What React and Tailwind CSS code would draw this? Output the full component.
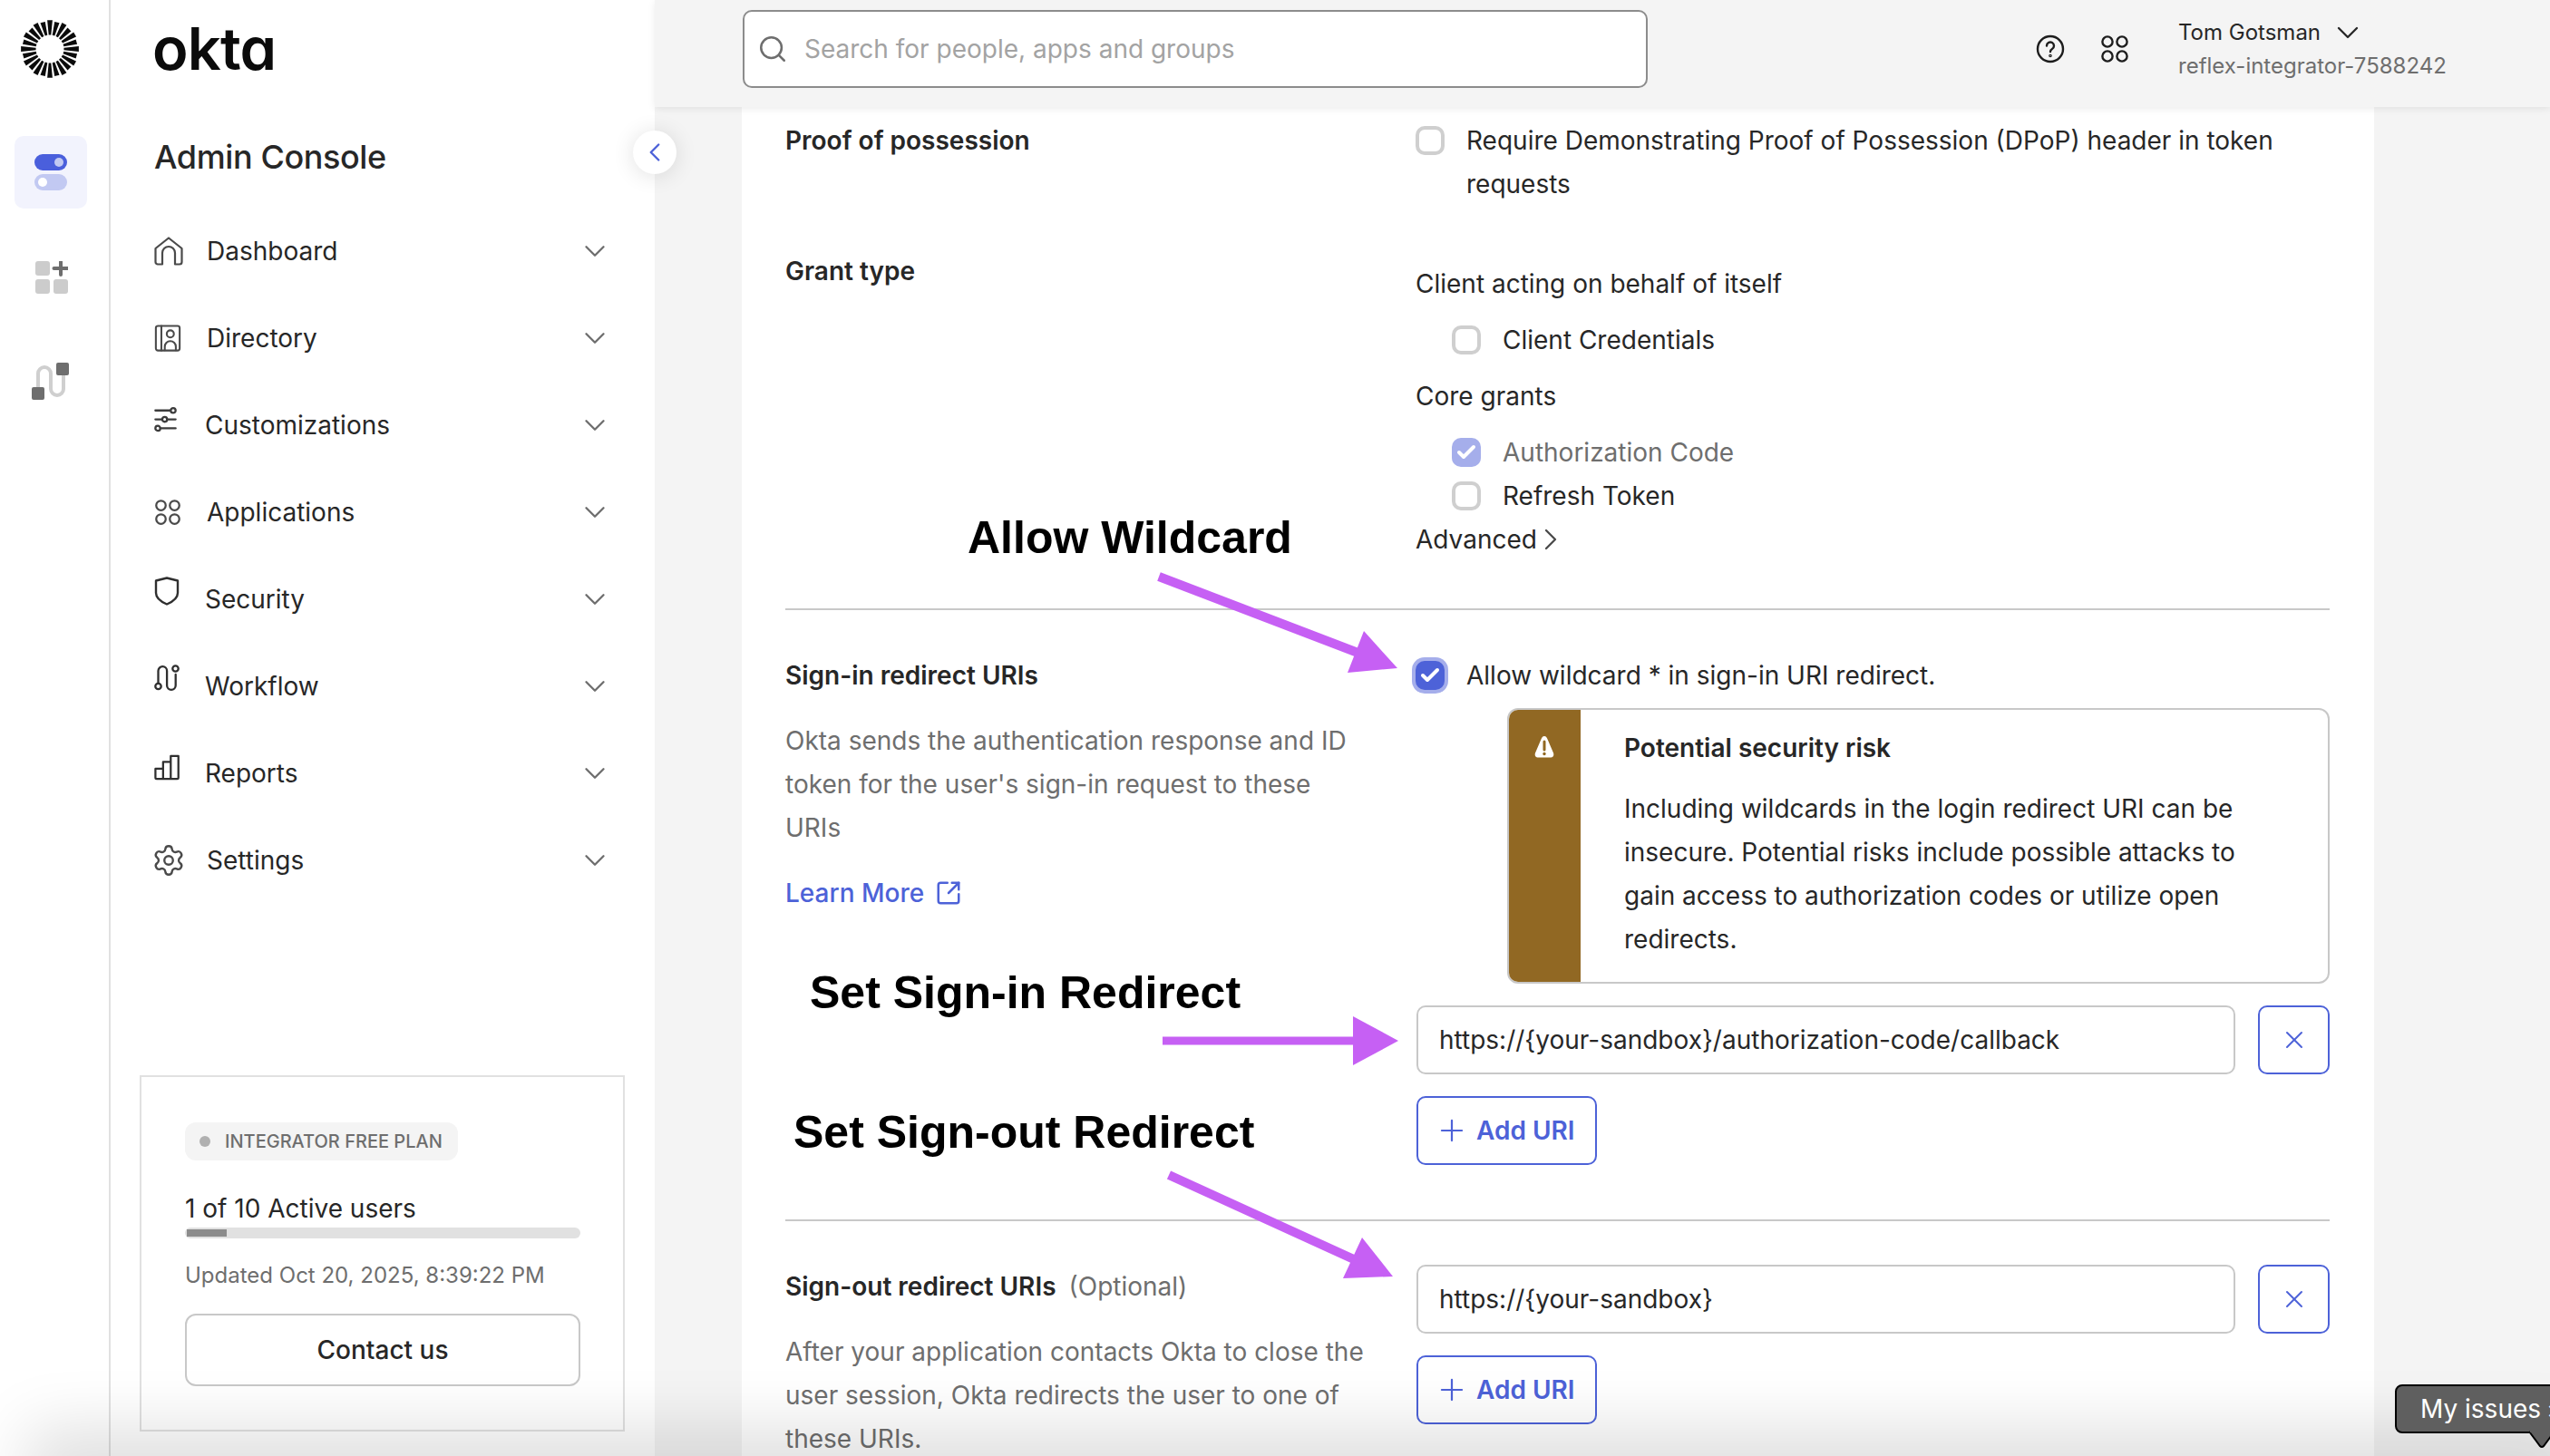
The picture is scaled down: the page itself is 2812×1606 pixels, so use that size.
import React from "react";
import { ChevronDown, ChevronLeft, ChevronRight, Search, Plus, X, Settings, SquareArrowOutUpRight, Check } from "lucide-react";

const S = ({ className, children, vb = "0 0 32 32", sw = 2.4 }) => (
  <svg viewBox={vb} fill="none" stroke="currentColor" strokeWidth={sw} strokeLinecap="round" strokeLinejoin="round" className={className}>
    {children}
  </svg>
);

const Home = () => (
  <S className="h-[32px] w-[32px] text-[#4a4a4a]" sw={2.2}>
    <path d="M1.5 13 16 1.5 30.5 13v15a2.5 2.5 0 0 1-2.5 2.5h-5V18a7 7 0 0 0-14 0v12.5H4A2.5 2.5 0 0 1 1.5 28z" />
  </S>
);
const Dir = () => (
  <S className="h-[30px] w-[30px] text-[#4a4a4a]" sw={2.2}>
    <rect x="2" y="1.5" width="28" height="29" rx="2.5" />
    <path d="M8.5 1.5v29" />
    <circle cx="19" cy="11" r="4.2" />
    <path d="M12.5 30v-4a6.5 6.5 0 0 1 13 0v4" />
  </S>
);
const Sliders = () => (
  <S className="h-[30px] w-[25px] text-[#3c3c3c]" vb="0 0 28 32" sw={2.6}>
    <path d="M1.5 4.5H20" />
    <circle cx="23.5" cy="4.5" r="3" />
    <circle cx="13" cy="15.5" r="3" />
    <path d="M1.5 15.5H9.5M16.5 15.5H26.5" />
    <circle cx="4.5" cy="26.5" r="3" />
    <path d="M8 26.5H26.5" />
  </S>
);
const Apps = ({ c = "h-[30px] w-[30px] text-[#4a4a4a]" }) => (
  <S className={c} sw={2.4}>
    <circle cx="8" cy="8" r="5.6" />
    <circle cx="24" cy="8" r="5.6" />
    <circle cx="8" cy="24" r="5.6" />
    <circle cx="24" cy="24" r="5.6" />
  </S>
);
const Shield = () => (
  <S className="h-[32px] w-[28px] text-[#2f2f2f]" vb="0 0 28 32" sw={2.4}>
    <path d="M2 4.5 14 1.5l12 3V18c0 5-5 9.500-12 12.500C7 27.500 2 23 2 18z" />
  </S>
);
const Flow = () => (
  <S className="h-[30px] w-[28px] text-[#2f2f2f]" vb="0 0 28 30" sw={2.3}>
    <circle cx="4.500" cy="24" r="3.200" />
    <circle cx="23.500" cy="4.500" r="3.200" />
    <path d="M4.500 20V7a4.800 4.800 0 0 1 9.600 0v16a4.800 4.800 0 0 0 9.600 0V11" />
  </S>
);
const Bars = () => (
  <S className="h-[30px] w-[30px] text-[#2f2f2f]" sw={2.4}>
    <path d="M1.500 17H10.500V29H3a1.500 1.500 0 0 1-1.500-1.500zM10.500 29V9H19.500V29zM19.500 29V2H28.500V27.500A1.500 1.500 0 0 1 27 29z" />
  </S>
);

const nav = [
  ["Dashboard", <Home />, 58, 0],
  ["Directory", <Dir />, 58, 0],
  ["Customizations", <Sliders />, 56, -6],
  ["Applications", <Apps />, 58, 0],
  ["Security", <Shield />, 56, -9],
  ["Workflow", <Flow />, 56, -9],
  ["Reports", <Bars />, 56, -6],
  ["Settings", <Settings className="ml-[-3px] h-[38px] w-[38px] text-[#4a4a4a]" strokeWidth={1.5} />, 58, 0],
];

const Box = () => <span className="block h-[32px] w-[32px] shrink-0 rounded-[10px] border-[4px] border-[#cfcfcf] bg-white" />;

const CheckRow = ({ label, state }) => (
  <div className="flex h-[48px] items-center gap-[24px] pl-[40px]">
    {state === "disabled" ? (
      <span className="flex h-[32px] w-[32px] items-center justify-center rounded-[10px] bg-[#a5aeeb]">
        <Check className="h-[24px] w-[24px] text-white" strokeWidth={4} />
      </span>
    ) : (
      <Box />
    )}
    <span className={state === "disabled" ? "text-[#6e6e6e]" : ""}>{label}</span>
  </div>
);

const UriRow = ({ value }) => (
  <div className="ml-[1px] flex gap-[25px]">
    <div className="flex h-[76px] w-[903px] items-center rounded-[10px] border-2 border-[#c8c8c8] bg-white pl-[23px]">{value}</div>
    <button className="flex h-[76px] w-[79px] items-center justify-center rounded-[10px] border-2 border-[#4d62d8] text-[#4d62d8]">
      <X className="h-[32px] w-[32px]" strokeWidth={1.5} />
    </button>
  </div>
);

const AddUri = () => (
  <button className="ml-[1px] mt-[24px] flex h-[76px] w-[199px] items-center gap-[8px] rounded-[10px] border-2 border-[#4d62d8] pl-[18px] font-semibold text-[#4d62d8]">
    <Plus className="h-[38px] w-[38px]" strokeWidth={1.4} />
    Add URI
  </button>
);

export default function App() {
  return (
    <div className="relative flex h-[1606px] w-[2812px] overflow-hidden bg-[#f4f4f4] font-['Inter',sans-serif] text-[28px] leading-[48px] text-[#272727]">
      {/* icon rail */}
      <aside className="flex w-[122px] shrink-0 flex-col items-center border-r-2 border-[#e1e1e1] bg-white">
        <svg viewBox="0 0 64 64" className="ml-[-10px] mt-[22px] h-[64px] w-[64px]">
          {Array.from({ length: 24 }, (_, i) => {
            const a = (i / 24) * Math.PI * 2 - Math.PI / 2;
            const r1 = 15.5;
            const r2 = i % 2 ? 30.5 : 32;
            const w1 = 0.085;
            const w2 = 0.09;
            const p = (r, t) => `${32 + Math.cos(t) * r},${32 + Math.sin(t) * r}`;
            return (
              <polygon
                key={i}
                points={`${p(r1, a - w1)} ${p(r2, a - w2)} ${p(r2, a + w2)} ${p(r1, a + w1)}`}
                fill="#0b0b0b"
              />
            );
          })}
        </svg>
        <div className="ml-[-9px] mt-[64px] flex h-[80px] w-[80px] flex-col items-center justify-center gap-[4px] rounded-[10px] bg-[#f2f3fd]">
          <span className="flex h-[18px] w-[36px] items-center justify-end rounded-full bg-[#4a5fdc] pr-[4px]">
            <span className="h-[10px] w-[10px] rounded-full bg-[#c2c9f2]" />
          </span>
          <span className="flex h-[18px] w-[36px] items-center rounded-full bg-[#c2c9f2] pl-[4px]">
            <span className="h-[10px] w-[10px] rounded-full bg-white" />
          </span>
        </div>
        <svg viewBox="0 0 36 36" className="ml-[-7px] mt-[58px] h-[36px] w-[36px]">
          <rect x="0" y="0" width="16" height="16" rx="3" fill="#cccccc" />
          <rect x="0" y="20" width="16" height="16" rx="3" fill="#cccccc" />
          <rect x="20" y="20" width="16" height="16" rx="3" fill="#cccccc" />
          <path d="M28 1v14M20.500 8h15" stroke="#6e6e6e" strokeWidth="4" strokeLinecap="round" />
        </svg>
        <svg viewBox="0 0 41 41" className="ml-[-9px] mt-[76px] h-[41px] w-[41px]">
          <path d="M7 27V12a7 7 0 0 1 14 0v17a7 7 0 0 0 14 0V14" fill="none" stroke="#cfcfcf" strokeWidth="4" />
          <rect x="0" y="27" width="14" height="14" rx="2" fill="#6e6e6e" />
          <rect x="27" y="0" width="14" height="14" rx="2" fill="#6e6e6e" />
        </svg>
      </aside>

      {/* sidebar */}
      <aside className="relative flex w-[600px] shrink-0 flex-col bg-white">
        <div className="flex h-[108px] items-center pl-[46px] text-[65px] font-semibold tracking-[-0.8px] text-[#0b0b0b] [font-feature-settings:'cv11']">okta</div>
        <div className="mt-[15px] flex h-[100px] items-center pl-[48px] text-[36px] font-medium tracking-[-0.4px]">Admin Console</div>
        <nav className="mt-[6px] flex flex-col">
          {nav.map(([label, icon, w, dy]) => (
            <div key={label} className="flex h-[96px] items-center pl-[48px] pr-[47px]">
              <span className="relative flex w-[58px] items-center" style={{ width: w, top: dy }}>{icon}</span>
              <span className="flex-1">{label}</span>
              <ChevronDown className="h-[38px] w-[38px] text-[#6e6e6e]" strokeWidth={1.5} />
            </div>
          ))}
        </nav>
        <div className="mb-[27px] ml-[32px] mt-auto flex h-[393px] w-[535px] flex-col border-2 border-[#e1e1e1] bg-white pl-[48px]">
          <div className="mt-[50px] flex h-[42px] w-[301px] items-center gap-[16px] rounded-[12px] bg-[#f4f4f4] pl-[16px] text-[20px] font-medium text-[#6e6e6e]">
            <span className="h-[12px] w-[12px] rounded-full bg-[#b0b0b0]" />
            INTEGRATOR FREE PLAN
          </div>
          <div className="mt-[29px] h-[48px]">1 of 10 Active users</div>
          <div className="mt-[-3px] h-[12px] w-[436px] rounded-full bg-[#e1e1e1] p-[2px]">
            <div className="h-[8px] w-[44px] bg-[#8c8c8c]" />
          </div>
          <div className="mt-[17px] text-[24px] text-[#6e6e6e]">Updated Oct 20, 2025, 8:39:22 PM</div>
          <button className="mt-[18px] h-[80px] w-[436px] rounded-[12px] border-2 border-[#c8c8c8] bg-white font-medium">Contact us</button>
        </div>
      </aside>

      {/* collapse button */}
      <button className="absolute left-[698px] top-[144px] z-20 flex h-[48px] w-[48px] items-center justify-center rounded-full bg-white text-[#4d62d8] shadow-[0_2px_24px_rgba(0,0,0,0.12)]">
        <ChevronLeft className="h-[34px] w-[34px]" strokeWidth={1.7} />
      </button>

      {/* main */}
      <div className="flex min-w-0 flex-1 flex-col">
        <header className="relative z-10 flex h-[118px] shrink-0 items-center bg-[#f4f4f4] pb-[10px] shadow-[0_2px_8px_rgba(0,0,0,0.08)]">
          <div className="ml-[97px] flex h-[86px] w-[998px] items-center rounded-[10px] border-2 border-[#8c8c8c] bg-white pl-[14px] text-[#a3a3a3]">
            <Search className="h-[34px] w-[34px] text-[#6e6e6e]" strokeWidth={1.8} />
            <span className="ml-[18px]">Search for people, apps and groups</span>
          </div>
          <svg viewBox="0 0 32 32" className="ml-[428px] h-[32px] w-[32px] text-[#1d1d1d]" fill="none" stroke="currentColor" strokeWidth="2.400" strokeLinecap="round">
            <circle cx="16" cy="16" r="14" />
            <path d="M12 12.500a4 4 0 1 1 6 3.500c-1.500.9-2 1.500-2 3" />
            <circle cx="16" cy="23.500" r="0.600" />
          </svg>
          <Apps c="ml-[39px] h-[32px] w-[32px] text-[#1d1d1d]" />
          <div className="ml-[54px] flex flex-col text-[24px] leading-[36px]">
            <div className="flex h-[36px] items-center">
              Tom Gotsman
              <ChevronDown className="ml-[10px] h-[40px] w-[40px]" strokeWidth={1.4} />
            </div>
            <div className="mt-[1px] text-[#6e6e6e]">reflex-integrator-7588242</div>
          </div>
        </header>
        <main className="ml-[96px] w-[1800px] flex-1 overflow-hidden bg-white px-[48px] pt-[13px]">
          <div className="grid grid-cols-[695px_1fr]">
            <div className="font-semibold">Proof of possession</div>
            <div className="flex items-start gap-[24px]">
              <span className="mt-[8px] block"><Box /></span>
              <div className="w-[960px]">Require Demonstrating Proof of Possession (DPoP) header in token requests</div>
            </div>
          </div>
          <div className="mt-[48px] grid grid-cols-[695px_1fr]">
            <div className="font-semibold">Grant type</div>
            <div className="pt-[14px]">
              <div>Client acting on behalf of itself</div>
              <div className="mt-[14px]"><CheckRow label="Client Credentials" /></div>
              <div className="mt-[14px]">Core grants</div>
              <div className="mt-[14px]"><CheckRow label="Authorization Code" state="disabled" /></div>
              <CheckRow label="Refresh Token" />
              <div className="flex h-[48px] items-center">
                Advanced
                <ChevronRight className="ml-[-5px] h-[40px] w-[40px] text-[#4a4a4a]" strokeWidth={1.4} />
              </div>
            </div>
          </div>
          <div className="mt-[52px] h-[2px] w-[1703px] bg-[#c8c8c8]" />
          <div className="mt-[48px] grid grid-cols-[695px_1fr]">
            <div>
              <div className="font-semibold">Sign-in redirect URIs</div>
              <p className="mt-[24px] w-[640px] text-[#6e6e6e]">Okta sends the authentication response and ID token for the user's sign-in request to these URIs</p>
              <div className="mt-[24px] flex items-center gap-[12px] font-medium text-[#4d62d8]">
                Learn More
                <SquareArrowOutUpRight className="h-[30px] w-[30px]" strokeWidth={2} />
              </div>
            </div>
            <div>
              <div className="flex h-[48px] items-center gap-[24px]">
                <span className="flex h-[32px] w-[32px] items-center justify-center rounded-[10px] bg-[#4d62d8] ring-4 ring-[#a5aeeb]">
                  <Check className="h-[24px] w-[24px] text-white" strokeWidth={4} />
                </span>
                Allow wildcard * in sign-in URI redirect.
              </div>
              <div className="ml-[101px] mt-[12px] flex h-[304px] w-[907px] overflow-hidden rounded-[12px] border-2 border-[#c8c8c8] bg-white">
                <div className="flex w-[79px] shrink-0 justify-center bg-[#916823] pt-[28px] pr-[2px]">
                  <svg viewBox="0 0 26 26" className="h-[26px] w-[26px]">
                    <path d="M13 1c2 0 3 2 4 4.500l6 14c1 3-.5 5-3.500 5H6.500c-3 0-4.500-2-3.500-5l6-14C10 3 11 1 13 1z" fill="#fff" />
                    <path d="M13 7v9" stroke="#916823" strokeWidth="3" strokeLinecap="round" />
                    <circle cx="13" cy="20.500" r="1.700" fill="#916823" />
                  </svg>
                </div>
                <div className="pl-[48px] pr-[40px] pt-[24px]">
                  <div className="font-semibold leading-[36px]">Potential security risk</div>
                  <p className="mt-[25px]">Including wildcards in the login redirect URI can be insecure. Potential risks include possible attacks to gain access to authorization codes or utilize open redirects.</p>
                </div>
              </div>
              <div className="mt-[24px]"><UriRow value="https://{your-sandbox}/authorization-code/callback" /></div>
              <AddUri />
            </div>
          </div>
          <div className="mt-[60px] h-[2px] w-[1703px] bg-[#c8c8c8]" />
          <div className="mt-[48px] grid grid-cols-[695px_1fr]">
            <div>
              <div className="flex gap-[14px]">
                <span className="font-semibold">Sign-out redirect URIs</span>
                <span className="text-[#6e6e6e]">(Optional)</span>
              </div>
              <p className="mt-[24px] w-[660px] text-[#6e6e6e]">After your application contacts Okta to close the user session, Okta redirects the user to one of these URIs.</p>
            </div>
            <div>
              <UriRow value="https://{your-sandbox}" />
              <AddUri />
            </div>
          </div>
        </main>
      </div>

      {/* annotation overlay */}
      <svg viewBox="0 0 2812 1606" className="pointer-events-none absolute inset-0 z-30 h-[1606px] w-[2812px]" fill="#c660f4">
        <path d="M1278 636 1500 721" stroke="#c660f4" strokeWidth="10" />
        <path d="M1541 737 1486 742 1504 696z" />
        <path d="M1282 1148H1500" stroke="#c660f4" strokeWidth="9" />
        <path d="M1542 1148 1492 1121V1175z" />
        <path d="M1289 1296 1495 1390" stroke="#c660f4" strokeWidth="10" />
        <path d="M1536 1408 1481 1410 1502 1365z" />
      </svg>
      <div className="absolute left-[1067px] top-[560px] z-30 font-['Liberation_Sans',sans-serif] text-[50px] font-bold leading-[66px] text-black">Allow Wildcard</div>
      <div className="absolute left-[893px] top-[1062px] z-30 font-['Liberation_Sans',sans-serif] text-[50px] font-bold leading-[66px] text-black">Set Sign-in Redirect</div>
      <div className="absolute left-[875px] top-[1216px] z-30 font-['Liberation_Sans',sans-serif] text-[50px] font-bold leading-[66px] text-black">Set Sign-out Redirect</div>

      {/* issue bubble */}
      <div className="absolute left-[2641px] top-[1527px] z-40 flex h-[54px] w-[200px] items-center gap-[6px] rounded-[8px] border-2 border-black bg-[#5f5f5f] pl-[26px] text-[28px] text-white">
        <span>My issues</span>
        <span>×</span>
      </div>
      <svg viewBox="0 0 30 20" className="absolute left-[2788px] top-[1578px] z-40 h-[20px] w-[30px]">
        <path d="M1 1 13 17q2 2 4 0L29 1" fill="#5f5f5f" stroke="#000" strokeWidth="2" />
        <path d="M2 0H28V2H2z" fill="#5f5f5f" />
      </svg>

      {/* bottom fade */}
      <div className="pointer-events-none absolute bottom-[-30px] left-[60px] right-0 z-20 h-[30px] shadow-[0_0_70px_30px_rgba(0,0,0,0.13)]" />
    </div>
  );
}
